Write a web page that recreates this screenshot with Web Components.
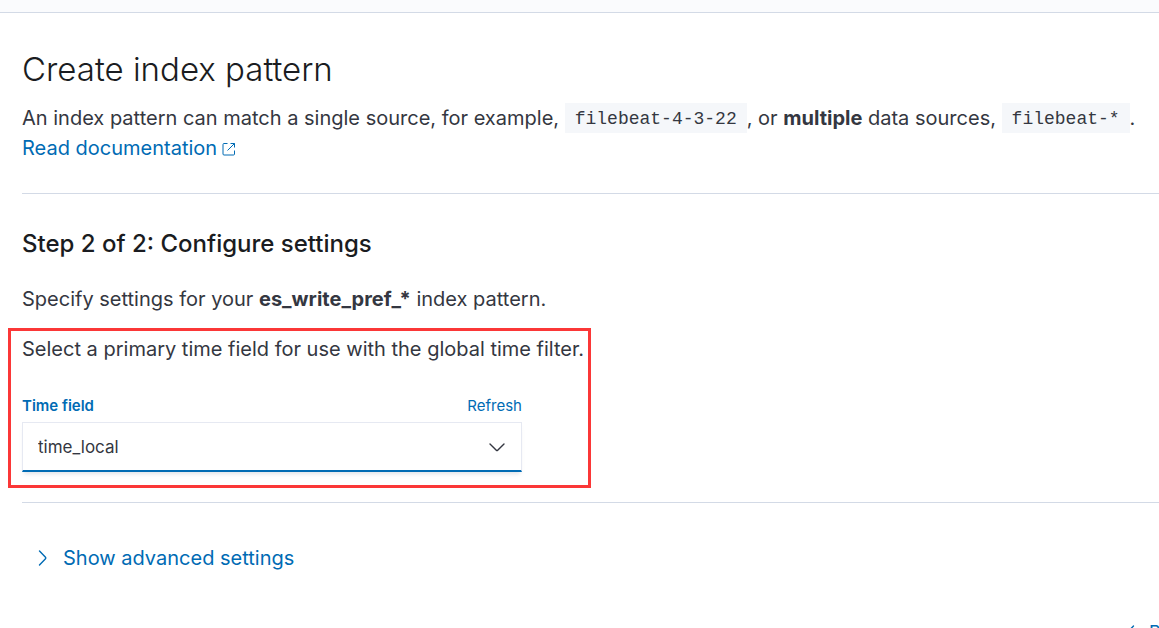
<!DOCTYPE html>
<html lang="en">
<head>
<meta charset="utf-8">
<title>Create index pattern</title>
<style>
  html { scrollbar-width: none; }
  body { margin: 0; background: #fff; color: #343741; font: 400 20px/30px Inter, "Liberation Sans", sans-serif; }
</style>
</head>
<body>
<pattern-page>
  <page-heading>
    <span slot="title">Create index pattern</span>
    An index pattern can match a single source, for example, <code-chip>filebeat-4-3-22</code-chip>, or <strong>multiple</strong> data sources, <code-chip>filebeat-*</code-chip>.
    <doc-link>Read documentation</doc-link>
  </page-heading>
  <settings-step>
    <span slot="title">Step 2 of 2: Configure settings</span>
    <span slot="intro">Specify settings for your <strong>es_write_pref_*</strong> index pattern.</span>
    <highlight-box>
      <time-field></time-field>
    </highlight-box>
  </settings-step>
  <advanced-toggle>Show advanced settings</advanced-toggle>
  <step-footer>Back</step-footer>
</pattern-page>

<script>
const define = (name, html) => customElements.define(name, class extends HTMLElement {
  constructor() {
    super();
    this.attachShadow({ mode: "open" }).innerHTML = html;
  }
});

define("pattern-page", `
  <style>
    :host { display: block; overflow-x: clip; }
    header { height: 12px; background: #fafbfd; border-bottom: 1px solid #d3dae6; }
    main { padding: 32px 0 0 22px; }
  </style>
  <header></header>
  <main><slot></slot></main>`);

define("page-heading", `
  <style>
    :host { display: block; padding-bottom: 30px; border-bottom: 1px solid #d3dae6; }
    h1 { margin: 0 0 10px; color: #1a1c21; font-size: 33px; font-weight: 300; line-height: 48px; }
    p { margin: 0; }
  </style>
  <h1><slot name="title"></slot></h1>
  <p><slot></slot></p>`);

define("code-chip", `
  <style>
    :host { display: inline; }
    code { display: inline-block; padding: 2px 10px 0; background: #f5f7fa; font: 18px/28px "Liberation Mono", monospace; vertical-align: top; }
  </style>
  <code><slot></slot></code>`);

define("doc-link", `
  <style>
    :host { display: block; }
    a { display: inline-flex; align-items: center; gap: 5px; color: #006bb4; text-decoration: none; }
    svg { display: block; margin-top: 2px; }
  </style>
  <a href="#docs"><slot></slot>
    <svg width="14" height="14" viewBox="0 0 14 14" fill="none" stroke="currentColor" aria-hidden="true">
      <path d="M5.500 1.500H2a1 1 0 0 0-1 1V12a1 1 0 0 0 1 1h9.500a1 1 0 0 0 1-1V8.500M8.500 1.500h4v4M12.500 1.500l-7 7"/>
    </svg></a>`);

define("settings-step", `
  <style>
    :host { display: block; padding: 34px 0 14px; border-bottom: 1px solid #d3dae6; }
    h2 { margin: 0 0 24px; color: #1a1c21; font-size: 24px; font-weight: 500; line-height: 32px; }
    p { margin: 0 0 14px; }
  </style>
  <h2><slot name="title"></slot></h2>
  <p><slot name="intro"></slot></p>
  <slot></slot>`);

define("highlight-box", `
  <style>
    :host { display: block; width: fit-content; box-sizing: border-box; margin-left: -14px; padding: 3px 4px 13px 11px; border: 3px solid #fb3737; }
  </style>
  <slot></slot>`);

define("time-field", `
  <style>
    :host { display: block; }
    p { margin: 0 0 30px; }
    .field { max-width: 500px; }
    .labels { display: flex; justify-content: space-between; margin-bottom: 5px; font-size: 15px; line-height: 23px; }
    label { font-weight: 600; color: #006bb4; }
    a { color: #006bb4; text-decoration: none; }
    .control { display: grid; align-items: center; }
    select, svg { grid-area: 1 / 1; }
    select {
      appearance: none; box-sizing: border-box; width: 100%; height: 50px; margin: 0; padding: 0 48px 0 15px;
      border: 1px solid #e6e9f2; border-bottom: 2px solid #006bb4; border-radius: 0; outline: 0;
      background: #fff; color: #343741; font: inherit; font-size: 17px;
      box-shadow: 0 4px 4px -2px rgba(152, 162, 179, .3);
    }
    svg { justify-self: end; margin-right: 15px; color: #343741; pointer-events: none; }
  </style>
  <p>Select a primary time field for use with the global time filter.</p>
  <div class="field">
    <div class="labels"><label for="time">Time field</label><a href="#refresh">Refresh</a></div>
    <div class="control">
      <select id="time"><option>time_local</option></select>
      <svg width="20" height="20" viewBox="0 0 20 20" fill="none" stroke="currentColor" stroke-width="1.4" stroke-linecap="round" stroke-linejoin="round" aria-hidden="true">
        <path d="M3 7l6.3 6.2a1 1 0 0 0 1.4 0L17 7"/>
      </svg>
    </div>
  </div>`);

define("advanced-toggle", `
  <style>
    :host { display: block; padding: 40px 10px 42px; }
    button { display: flex; align-items: center; gap: 11px; margin: 0; padding: 0; border: 0; background: none; color: #006bb4; font: inherit; }
    svg { display: block; }
  </style>
  <button type="button">
    <svg width="20" height="20" viewBox="0 0 20 20" fill="none" stroke="currentColor" stroke-width="1.4" stroke-linecap="round" stroke-linejoin="round" aria-hidden="true">
      <path d="M7.500 3l6 6.300a1 1 0 0 1 0 1.400L7.500 17"/>
    </svg>
    <slot></slot>
  </button>`);

define("step-footer", `
  <style>
    :host { display: block; padding-bottom: 20px; }
    button { display: flex; align-items: center; gap: 8px; margin: 0 0 0 calc(100% - 38px); padding: 0; border: 0; background: none; color: #006bb4; font: inherit; font-size: 18px; line-height: 36px; }
    svg { display: block; }
  </style>
  <button type="button">
    <svg width="20" height="20" viewBox="0 0 20 20" fill="none" stroke="currentColor" stroke-width="1.4" stroke-linecap="round" stroke-linejoin="round" aria-hidden="true">
      <path d="M12.500 3l-6 6.300a1 1 0 0 0 0 1.400L12.500 17"/>
    </svg>
    <slot></slot>
  </button>`);
</script>
</body>
</html>
